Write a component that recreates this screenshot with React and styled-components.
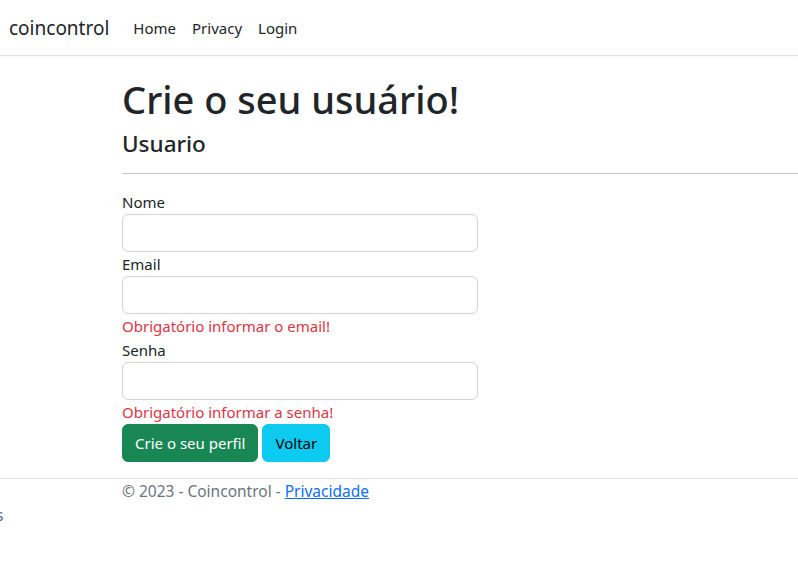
import styled, { createGlobalStyle } from 'styled-components';

const GlobalStyle = createGlobalStyle`
  html, body {
    margin: 0;
    padding: 0;
    background: #fff;
  }
  body {
    font-family: "Noto Sans", "Open Sans", sans-serif;
    font-size: 15px;
    line-height: 24px;
    color: #212529;
  }
  * { box-sizing: border-box; }
`;

const Navbar = styled.nav`
  display: flex;
  align-items: center;
  height: 56px;
  border-bottom: 1px solid #dee2e6;
  box-shadow: 0 1px 2px rgba(0, 0, 0, 0.04);
  padding: 0 9px;
`;

const Brand = styled.a`
  font-size: 19px;
  line-height: 30px;
  color: #212529;
  text-decoration: none;
  margin-right: 16px;
`;

const NavLink = styled.a`
  padding: 8px;
  color: #212529;
  text-decoration: none;
`;

const Main = styled.main`
  padding: 20px 0 16px 122px;
`;

const Title = styled.h1`
  margin: 0 0 8px;
  font-size: 38px;
  line-height: 46px;
  font-weight: 500;
`;

const Subtitle = styled.h4`
  margin: 0 0 1px;
  font-size: 22.5px;
  line-height: 27px;
  font-weight: 500;
`;

const Rule = styled.hr`
  margin: 16px 0;
  border: 0;
  border-top: 1px solid #c7c8c9;
`;

const Form = styled.form`
  width: 356px;
`;

const Label = styled.label`
  display: block;
`;

const Input = styled.input`
  display: block;
  width: 100%;
  height: 38px;
  padding: 6px 12px;
  font: inherit;
  border: 1px solid #ced4da;
  border-radius: 6px;
  background: #fff;
`;

const Error = styled.span`
  display: block;
  color: #dc3545;
`;

const Actions = styled.div`
  display: flex;
  gap: 4px;
`;

const Button = styled.button`
  height: 38px;
  padding: 6px 12px;
  font: inherit;
  border: 1px solid ${p => p.$bg};
  border-radius: 6px;
  background: ${p => p.$bg};
  color: ${p => p.$fg};
  cursor: pointer;
`;

const Footer = styled.footer`
  border-top: 1px solid #dee2e6;
  color: #6c757d;
  font-size: 15.5px;
`;

const FooterText = styled.div`
  padding-left: 122px;
`;

const FooterLink = styled.a`
  color: #0d6efd;
  text-decoration: underline;
`;

const Clipped = styled.div`
  margin-left: -4px;
  color: #5a6b8c;
`;

export default function App() {
  return (
    <>
      <GlobalStyle />
      <Navbar>
        <Brand href="#">coincontrol</Brand>
        <NavLink href="#">Home</NavLink>
        <NavLink href="#">Privacy</NavLink>
        <NavLink href="#">Login</NavLink>
      </Navbar>
      <Main>
        <Title>Crie o seu usuário!</Title>
        <Subtitle>Usuario</Subtitle>
        <Rule />
        <Form onSubmit={e => e.preventDefault()}>
          <Label htmlFor="nome">Nome</Label>
          <Input id="nome" />
          <Label htmlFor="email">Email</Label>
          <Input id="email" />
          <Error>Obrigatório informar o email!</Error>
          <Label htmlFor="senha">Senha</Label>
          <Input id="senha" type="password" />
          <Error>Obrigatório informar a senha!</Error>
          <Actions>
            <Button $bg="#198754" $fg="#fff">Crie o seu perfil</Button>
            <Button $bg="#0dcaf0" $fg="#000">Voltar</Button>
          </Actions>
        </Form>
      </Main>
      <Footer>
        <FooterText>
          © 2023 - Coincontrol - <FooterLink href="#">Privacidade</FooterLink>
        </FooterText>
        <Clipped>s</Clipped>
      </Footer>
    </>
  );
}
